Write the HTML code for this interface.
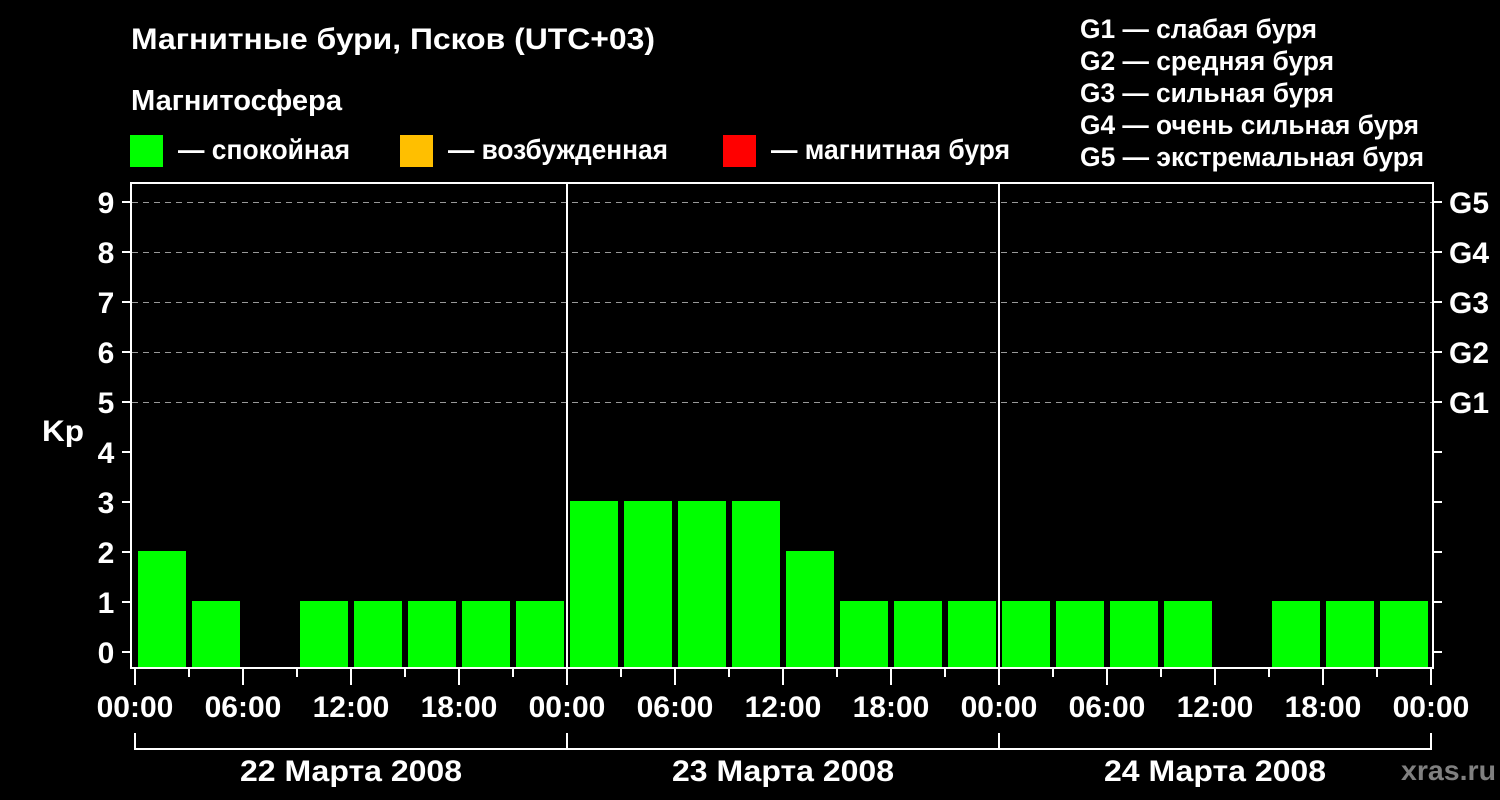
<!DOCTYPE html>
<html><head><meta charset="utf-8"><style>
html,body{margin:0;padding:0;background:#000;}
svg{display:block}
text{font-family:"Liberation Sans",Arial,sans-serif;font-weight:bold;fill:#fff}
</style></head><body>
<svg width="1500" height="800" viewBox="0 0 1500 800">
<rect width="1500" height="800" fill="#000"/>
<text x="131" y="49" font-size="30" textLength="524" lengthAdjust="spacingAndGlyphs">Магнитные бури, Псков (UTC+03)</text>
<text x="131" y="110" font-size="29" textLength="211" lengthAdjust="spacingAndGlyphs">Магнитосфера</text>
<rect x="130" y="135" width="33" height="32" fill="#00ff00"/>
<text x="178" y="159" font-size="28" textLength="172" lengthAdjust="spacingAndGlyphs">— спокойная</text>
<rect x="400" y="135" width="33" height="32" fill="#ffbf00"/>
<text x="448" y="159" font-size="28" textLength="220" lengthAdjust="spacingAndGlyphs">— возбужденная</text>
<rect x="723" y="135" width="33" height="32" fill="#ff0000"/>
<text x="771" y="159" font-size="28" textLength="239" lengthAdjust="spacingAndGlyphs">— магнитная буря</text>
<g font-size="27">
<text x="1080" y="38" textLength="237" lengthAdjust="spacingAndGlyphs">G1 — слабая буря</text>
<text x="1080" y="70" textLength="254" lengthAdjust="spacingAndGlyphs">G2 — средняя буря</text>
<text x="1080" y="102" textLength="254" lengthAdjust="spacingAndGlyphs">G3 — сильная буря</text>
<text x="1080" y="134" textLength="339" lengthAdjust="spacingAndGlyphs">G4 — очень сильная буря</text>
<text x="1080" y="166" textLength="344" lengthAdjust="spacingAndGlyphs">G5 — экстремальная буря</text>
</g>
<g stroke="#999" stroke-width="1" stroke-dasharray="6,5">
<line x1="132" y1="202.5" x2="1432" y2="202.5"/>
<line x1="132" y1="252.5" x2="1432" y2="252.5"/>
<line x1="132" y1="302.5" x2="1432" y2="302.5"/>
<line x1="132" y1="352.5" x2="1432" y2="352.5"/>
<line x1="132" y1="402.5" x2="1432" y2="402.5"/>
</g>
<g fill="#00ff00">
<rect x="138" y="551" width="48" height="116"/>
<rect x="192" y="601" width="48" height="66"/>
<rect x="300" y="601" width="48" height="66"/>
<rect x="354" y="601" width="48" height="66"/>
<rect x="408" y="601" width="48" height="66"/>
<rect x="462" y="601" width="48" height="66"/>
<rect x="516" y="601" width="48" height="66"/>
<rect x="570" y="501" width="48" height="166"/>
<rect x="624" y="501" width="48" height="166"/>
<rect x="678" y="501" width="48" height="166"/>
<rect x="732" y="501" width="48" height="166"/>
<rect x="786" y="551" width="48" height="116"/>
<rect x="840" y="601" width="48" height="66"/>
<rect x="894" y="601" width="48" height="66"/>
<rect x="948" y="601" width="48" height="66"/>
<rect x="1002" y="601" width="48" height="66"/>
<rect x="1056" y="601" width="48" height="66"/>
<rect x="1110" y="601" width="48" height="66"/>
<rect x="1164" y="601" width="48" height="66"/>
<rect x="1272" y="601" width="48" height="66"/>
<rect x="1326" y="601" width="48" height="66"/>
<rect x="1380" y="601" width="48" height="66"/>
</g>
<g stroke="#fff" stroke-width="2" fill="none">
<rect x="131" y="183" width="1302" height="485"/>
<line x1="567" y1="183" x2="567" y2="668"/>
<line x1="999" y1="183" x2="999" y2="668"/>
<path d="M122 202H131M122 252H131M122 302H131M122 352H131M122 402H131M122 452H131M122 502H131M122 552H131M122 602H131M122 652H131"/>
<path d="M1433 202H1442M1433 252H1442M1433 302H1442M1433 352H1442M1433 402H1442M1433 452H1442M1433 502H1442M1433 552H1442M1433 602H1442M1433 652H1442"/>
<path d="M135 669V685M189 669V677M243 669V685M297 669V677M351 669V685M405 669V677M459 669V685M513 669V677M567 669V685M621 669V677M675 669V685M729 669V677M783 669V685M837 669V677M891 669V685M945 669V677M999 669V685M1053 669V677M1107 669V685M1161 669V677M1215 669V685M1269 669V677M1323 669V685M1377 669V677M1431 669V685"/>
<path d="M135 733V749H1431V733M567 733V749M999 733V749"/>
</g>
<g font-size="30" text-anchor="middle">
<text x="106" y="213">9</text><text x="106" y="263">8</text><text x="106" y="313">7</text><text x="106" y="363">6</text><text x="106" y="413">5</text>
<text x="106" y="463">4</text><text x="106" y="513">3</text><text x="106" y="563">2</text><text x="106" y="613">1</text><text x="106" y="663">0</text>
</g>
<text x="42" y="441" font-size="30" textLength="42" lengthAdjust="spacingAndGlyphs">Kp</text>
<g font-size="30">
<text x="1449" y="213">G5</text><text x="1449" y="263">G4</text><text x="1449" y="313">G3</text><text x="1449" y="363">G2</text><text x="1449" y="413">G1</text>
</g>
<g font-size="30" text-anchor="middle">
<text x="135" y="717">00:00</text><text x="243" y="717">06:00</text><text x="351" y="717">12:00</text><text x="459" y="717">18:00</text>
<text x="567" y="717">00:00</text><text x="675" y="717">06:00</text><text x="783" y="717">12:00</text><text x="891" y="717">18:00</text>
<text x="999" y="717">00:00</text><text x="1107" y="717">06:00</text><text x="1215" y="717">12:00</text><text x="1323" y="717">18:00</text>
<text x="1431" y="717">00:00</text>
<text x="351" y="781" textLength="222" lengthAdjust="spacingAndGlyphs">22 Марта 2008</text>
<text x="783" y="781" textLength="222" lengthAdjust="spacingAndGlyphs">23 Марта 2008</text>
<text x="1215" y="781" textLength="222" lengthAdjust="spacingAndGlyphs">24 Марта 2008</text>
</g>
<text x="1401" y="780" font-size="28" style="fill:#808080" textLength="95" lengthAdjust="spacingAndGlyphs">xras.ru</text>
</svg>
</body></html>
